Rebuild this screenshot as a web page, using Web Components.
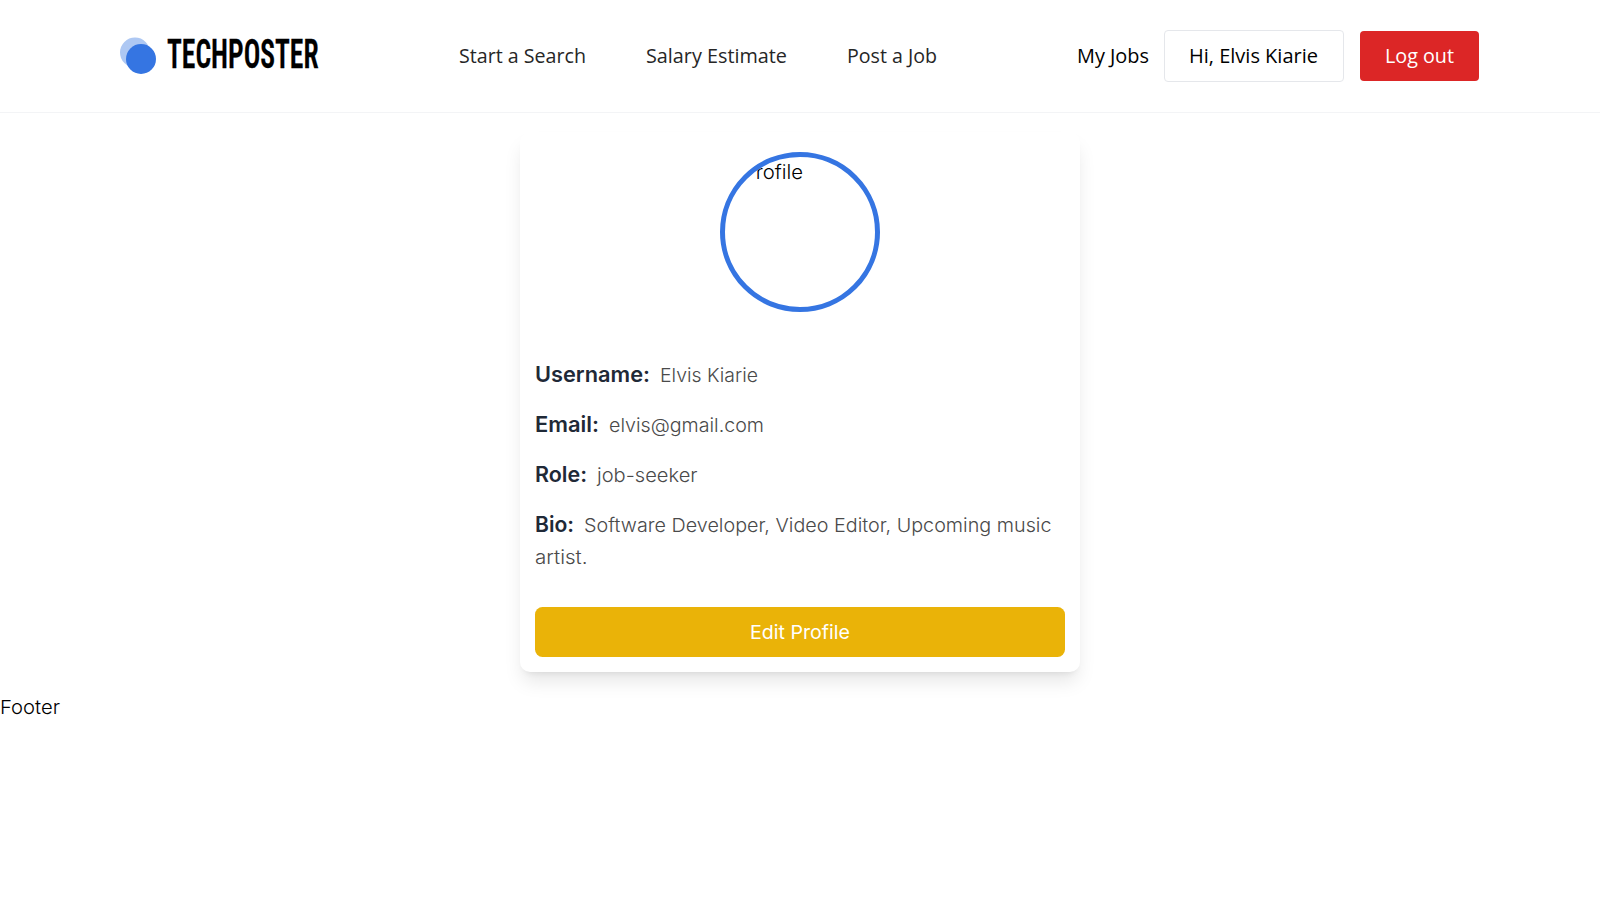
<!DOCTYPE html>
<html lang="en">
<head>
<meta charset="utf-8">
<title>Techposter</title>
<style>
html{font-size:20px}
body{margin:0;background:#fff;color:#000;font-family:Inter,sans-serif;line-height:30px}
</style>
</head>
<body>
<tech-app></tech-app>
<script>
const define=(name,html,after)=>customElements.define(name,class extends HTMLElement{
  constructor(){super();this.attachShadow({mode:'open'}).innerHTML=html}
  connectedCallback(){if(after)after(this)}
});
/* A text run held to a fixed width */
define('fit-text','<style>:host{display:inline-block;white-space:pre;vertical-align:baseline}span{display:inline-block;transform-origin:0 50%}</style><span><slot></slot></span>',el=>{
  const s=el.shadowRoot.querySelector('span'),w=+el.getAttribute('w');
  const n=s.getBoundingClientRect().width;
  s.style.transform=`scaleX(${w/n})`;
  el.style.width=w+'px';
});
define('brand-logo',`<style>:host{display:flex;align-items:center;width:200px;height:40px}svg{display:block;flex:none;margin-right:9.5px}
fit-text{font:600 40.5px/40px Roboto,sans-serif;font-stretch:75%;-webkit-text-stroke:.3px #000;margin-top:-4px}</style>
<svg width="37" height="38" viewBox="0 0 37 38"><circle cx="15" cy="15.5" r="15" fill="#aec8f3"/><circle cx="21" cy="22" r="15" fill="#3575e2"/></svg><fit-text w="151.5">TECHPOSTER</fit-text>`);
define('site-header',`<style>:host{display:flex;box-sizing:border-box;height:113px;padding:0 121px 0 120px;align-items:center;justify-content:space-between;border-bottom:1px solid #f3f4f6;font-family:"Open Sans",sans-serif;font-size:19.5px;font-weight:400}
nav{display:flex;gap:60px;margin-right:1px;color:#262626}
.acts{display:flex;align-items:center;gap:15px;font-weight:400}
.b{box-sizing:border-box;height:52px;width:180px;border:1px solid #e5e7eb;border-radius:4px;display:flex;align-items:center;justify-content:center}
.r{height:50px;width:119.5px;margin-left:1px;background:#dc2626;color:#fff;border:0;font-weight:500;border-radius:4px}
</style>
<brand-logo></brand-logo>
<nav><fit-text w="127">Start a Search</fit-text><fit-text w="141">Salary Estimate</fit-text><fit-text w="90">Post a Job</fit-text></nav>
<div class="acts"><fit-text w="72">My Jobs</fit-text><div class="b"><fit-text w="129">Hi, Elvis Kiarie</fit-text></div><div class="b r"><fit-text w="69">Log out</fit-text></div></div>`);
define('profile-avatar',`<style>:host{display:block;box-sizing:border-box;width:160px;height:160px;border:5px solid #3575e2;border-radius:50%;overflow:hidden;padding:0 0 0 18px;font-size:19.5px;font-weight:350}</style><fit-text w="60">Profile</fit-text>`);
define('profile-row',`<style>:host{display:block;font-size:19px;font-weight:300;color:#4a4a4a}
div{line-height:32px;height:32.5px}
::slotted([slot=more]){margin-top:2px}
::slotted([slot=label]){font-size:21.5px;font-weight:600;color:#1f2937;margin-right:10px}</style><div><slot name="label"></slot><slot></slot></div><slot name="more"></slot>`);
define('profile-card',`<style>:host{display:flex;flex-direction:column;box-sizing:border-box;width:560px;height:540px;margin:19px auto 20px;padding:20px 15px 15px;border-radius:10px;background:#fff;box-shadow:0 12.5px 18.75px -3.75px rgba(0,0,0,.1),0 5px 7.5px -5px rgba(0,0,0,.1)}
profile-avatar{margin:0 auto 46px}
.rows{display:flex;flex-direction:column;gap:17.5px}
.btn{margin-top:auto;height:50px;border-radius:7.5px;background:#eab308;color:#fff;font-size:19px;font-weight:400;display:flex;align-items:center;justify-content:center;box-sizing:border-box;padding-top:1px}</style>
<profile-avatar></profile-avatar>
<div class="rows">
<profile-row><fit-text slot="label" w="115">Username:</fit-text><fit-text w="98">Elvis Kiarie</fit-text></profile-row>
<profile-row><fit-text slot="label" w="64">Email:</fit-text><fit-text w="155">elvis@gmail.com</fit-text></profile-row>
<profile-row><fit-text slot="label" w="52">Role:</fit-text><fit-text w="100.5">job-seeker</fit-text></profile-row>
<profile-row><fit-text slot="label" w="39">Bio:</fit-text><fit-text w="467.5">Software Developer, Video Editor, Upcoming music</fit-text><fit-text slot="more" w="52.5">artist.</fit-text></profile-row>
</div>
<div class="btn"><fit-text w="100">Edit Profile</fit-text></div>`);
define('site-footer','<style>:host{display:block;font-size:19.3px;font-weight:350}</style><fit-text w="60">Footer</fit-text>');
define('tech-app','<style>:host{display:block}</style><site-header></site-header><profile-card></profile-card><site-footer></site-footer>');
</script>
</body>
</html>
